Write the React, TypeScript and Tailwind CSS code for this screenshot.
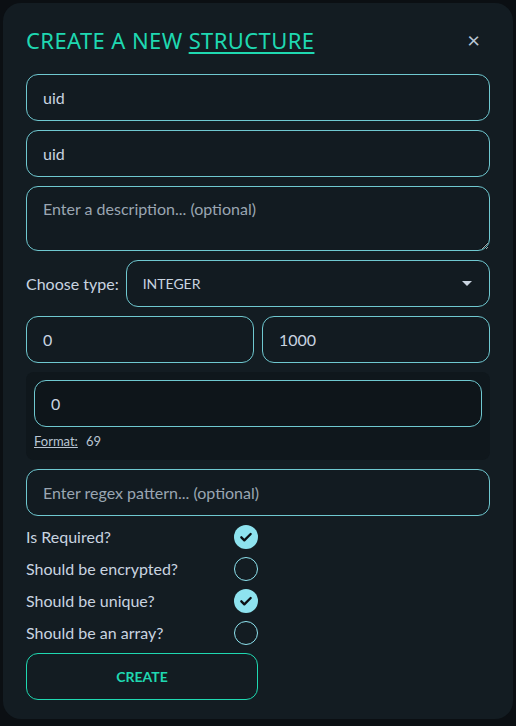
import { useState } from "react";

const inputClass =
  "w-full h-[47px] rounded-xl border border-[#6fc8d0] bg-[#121b21] px-4 text-[16px] text-[#c9d4e0] placeholder-[#9aa6b2] outline-none";

function Circle({ checked }: { checked: boolean }) {
  if (checked) {
    return (
      <span className="flex h-6 w-6 items-center justify-center rounded-full bg-[#8ee3ef]">
        <svg viewBox="0 0 24 24" className="h-4 w-4" fill="none" stroke="#0b1014" strokeWidth="3.5" strokeLinecap="round" strokeLinejoin="round">
          <path d="M5 12.5l4.5 4.5L19 7.5" />
        </svg>
      </span>
    );
  }
  return <span className="block h-6 w-6 rounded-full border-[1.5px] border-[#8ee3ef]" />;
}

export default function App() {
  const [flags, setFlags] = useState([true, false, true, false]);
  const labels = ["Is Required?", "Should be encrypted?", "Should be unique?", "Should be an array?"];

  return (
    <div className="h-[726px] w-[516px] bg-[#0b0f13] p-[3px] pb-[8px]" style={{ fontFamily: "Lato, 'Open Sans', sans-serif" }}>
      <div className="rounded-[18px] bg-[#131c22] px-[23px] pt-[23px] pb-[19px]">
        <div className="flex items-center justify-between">
          <h1 className="text-[22px] leading-[28px] tracking-[0.4px] text-[#1fd8b1]" style={{ fontFamily: "'Noto Sans', sans-serif" }}>
            CREATE A NEW <span className="underline underline-offset-[3px]">STRUCTURE</span>
          </h1>
          <button className="mr-[10px] text-[22px] leading-none text-[#b9c6d4]">×</button>
        </div>

        <div className="mt-[20px] flex flex-col gap-[9px]">
          <input className={inputClass} defaultValue="uid" />
          <input className={inputClass} defaultValue="uid" />
          <textarea
            className="block h-[65px] w-full resize-y rounded-xl border border-[#6fc8d0] bg-[#121b21] px-4 py-[10px] text-[16px] text-[#c9d4e0] placeholder-[#9aa6b2] outline-none"
            placeholder="Enter a description... (optional)"
          />
          <div className="flex h-[47px] items-center gap-[7px]">
            <span className="text-[16px] text-[#c9d4e0]">Choose type:</span>
            <div className="flex h-[47px] flex-1 items-center justify-between rounded-xl border border-[#6fc8d0] bg-[#121b21] pl-4 pr-[17px]">
              <span className="text-[14px] text-[#c9d4e0]">INTEGER</span>
              <svg viewBox="0 0 10 5" className="h-[5px] w-[10px]" fill="#c9d4e0">
                <path d="M0 0h10L5 5z" />
              </svg>
            </div>
          </div>
          <div className="flex gap-2">
            <input className={inputClass} defaultValue="0" />
            <input className={inputClass} defaultValue="1000" />
          </div>
          <div className="rounded-lg bg-[#0f171c] px-2 pt-2 pb-[8px]">
            <input className="block h-[47px] w-full rounded-xl border border-[#6fc8d0] bg-[#0e151a] px-4 text-[16px] text-[#c9d4e0] outline-none" defaultValue="0" />
            <div className="mt-[5px] flex h-[20px] items-center gap-2 text-[13px] text-[#b9c5d2]">
              <span className="underline">Format:</span>
              <span>69</span>
            </div>
          </div>
          <input className={inputClass} placeholder="Enter regex pattern... (optional)" />
        </div>

        <div className="mt-[9px] flex flex-col gap-2">
          {labels.map((label, i) => (
            <div key={label} className="flex h-6 items-center">
              <span className="w-[208px] text-[16px] text-[#c9d4e0]">{label}</span>
              <button onClick={() => setFlags(flags.map((f, j) => (j === i ? !f : f)))}>
                <Circle checked={flags[i]} />
              </button>
            </div>
          ))}
        </div>

        <button className="mt-2 h-[47px] w-[232px] rounded-xl border border-[#1fd8b1] text-[14px] font-bold text-[#1fd8b1]">
          CREATE
        </button>
      </div>
    </div>
  );
}
